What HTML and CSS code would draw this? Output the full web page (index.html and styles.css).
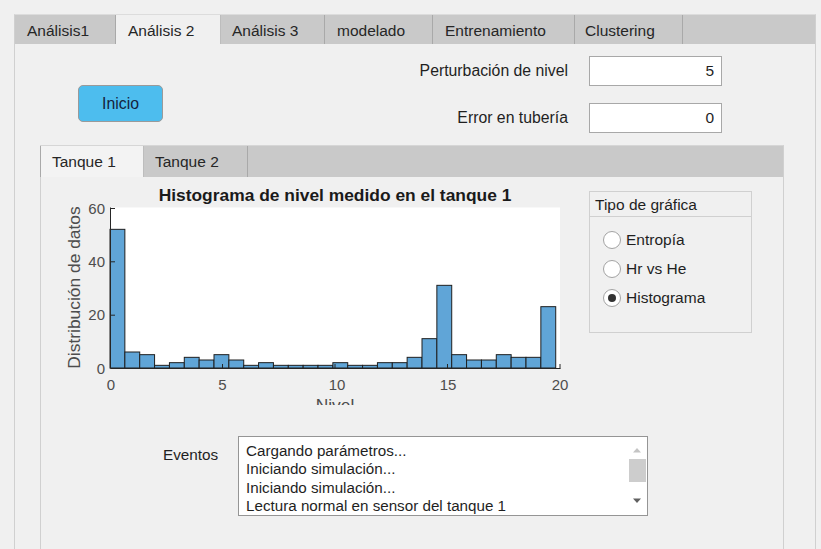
FILE: index.html
```html
<!DOCTYPE html>
<html lang="es">
<head>
<meta charset="utf-8">
<title>Análisis 2</title>
<link rel="stylesheet" href="styles.css">
</head>
<body>
<div class="app">
  <div class="tabgroup outer">
    <div class="tabbar">
      <div class="tab t1">Análisis1</div>
      <div class="tab active t2">Análisis 2</div>
      <div class="tab t3">Análisis 3</div>
      <div class="tab t4">modelado</div>
      <div class="tab t5">Entrenamiento</div>
      <div class="tab t6">Clustering</div>
    </div>
    <div class="tabbody">
      <div class="top">
        <button class="btn">Inicio</button>
        <div class="fields">
          <div class="field"><span class="flabel">Perturbación de nivel</span><input class="num" type="text" value="5"></div>
          <div class="field"><span class="flabel">Error en tubería</span><input class="num" type="text" value="0"></div>
        </div>
      </div>

      <div class="tabgroup inner">
        <div class="tabbar small">
          <div class="tab active k1">Tanque 1</div>
          <div class="tab k2">Tanque 2</div>
        </div>
        <div class="tabbody innerbody">
          <div class="chart-row">
            <svg class="chart" width="520" height="216" viewBox="0 0 520 216">
              <text class="title" x="279" y="11.5" text-anchor="middle">Histograma de nivel medido en el tanque 1</text>
              <rect x="54" y="18.5" width="450" height="160.5" fill="#ffffff"/>
              <g class="bars">
                <rect x="54.00" y="40.33" width="14.86" height="138.67"/>
                <rect x="68.86" y="163.00" width="14.86" height="16.00"/>
                <rect x="83.71" y="165.67" width="14.86" height="13.33"/>
                <rect x="98.57" y="176.33" width="14.86" height="2.67"/>
                <rect x="113.43" y="173.67" width="14.86" height="5.33"/>
                <rect x="128.29" y="168.33" width="14.86" height="10.67"/>
                <rect x="143.14" y="171.00" width="14.86" height="8.00"/>
                <rect x="158.00" y="165.67" width="14.86" height="13.33"/>
                <rect x="172.86" y="171.00" width="14.86" height="8.00"/>
                <rect x="187.71" y="176.33" width="14.86" height="2.67"/>
                <rect x="202.57" y="173.67" width="14.86" height="5.33"/>
                <rect x="217.43" y="176.33" width="14.86" height="2.67"/>
                <rect x="232.29" y="176.33" width="14.86" height="2.67"/>
                <rect x="247.14" y="176.33" width="14.86" height="2.67"/>
                <rect x="262.00" y="176.33" width="14.86" height="2.67"/>
                <rect x="276.86" y="173.67" width="14.86" height="5.33"/>
                <rect x="291.71" y="176.33" width="14.86" height="2.67"/>
                <rect x="306.57" y="176.33" width="14.86" height="2.67"/>
                <rect x="321.43" y="173.67" width="14.86" height="5.33"/>
                <rect x="336.29" y="173.67" width="14.86" height="5.33"/>
                <rect x="351.14" y="168.33" width="14.86" height="10.67"/>
                <rect x="366.00" y="149.67" width="14.86" height="29.33"/>
                <rect x="380.86" y="96.33" width="14.86" height="82.67"/>
                <rect x="395.71" y="165.67" width="14.86" height="13.33"/>
                <rect x="410.57" y="171.00" width="14.86" height="8.00"/>
                <rect x="425.43" y="171.00" width="14.86" height="8.00"/>
                <rect x="440.29" y="165.67" width="14.86" height="13.33"/>
                <rect x="455.14" y="168.33" width="14.86" height="10.67"/>
                <rect x="470.00" y="168.33" width="14.86" height="10.67"/>
                <rect x="484.86" y="117.67" width="14.86" height="61.33"/>
              </g>
              <path class="axis" d="M54.5 18.5 V179.5 H504.5 M54.5 19.5 H59 M54.5 72.8 H59 M54.5 126.2 H59 M166.5 179.5 V175 M279 179.5 V175 M391.5 179.5 V175 M504 179.5 V175"/>
              <text class="tick" x="49" y="24.7" text-anchor="end">60</text>
              <text class="tick" x="49" y="78.1" text-anchor="end">40</text>
              <text class="tick" x="49" y="131.4" text-anchor="end">20</text>
              <text class="tick" x="49" y="184.7" text-anchor="end">0</text>
              <text class="tick" x="55" y="201" text-anchor="middle">0</text>
              <text class="tick" x="166.5" y="201" text-anchor="middle">5</text>
              <text class="tick" x="281" y="201" text-anchor="middle">10</text>
              <text class="tick" x="392" y="201" text-anchor="middle">15</text>
              <text class="tick" x="504" y="201" text-anchor="middle">20</text>
              <text class="axlabel" transform="translate(24 98.5) rotate(-90)" text-anchor="middle">Distribución de datos</text>
              <text class="axlabel" x="279" y="221.5" text-anchor="middle">Nivel</text>
            </svg>

            <div class="group">
              <div class="group-head">Tipo de gráfica</div>
              <div class="radios">
                <div class="radio"><span class="dot"></span><span>Entropía</span></div>
                <div class="radio"><span class="dot"></span><span>Hr vs He</span></div>
                <div class="radio"><span class="dot on"></span><span>Histograma</span></div>
              </div>
            </div>
          </div>

          <div class="events">
            <span class="elabel">Eventos</span>
            <div class="listbox">
              <div class="lines">
                <div>Cargando parámetros...</div>
                <div>Iniciando simulación...</div>
                <div>Iniciando simulación...</div>
                <div>Lectura normal en sensor del tanque 1</div>
              </div>
              <div class="scroll">
                <svg class="arrow" width="10" height="6" viewBox="0 0 10 6"><path d="M1 5.5 L5 1 L9 5.5 Z" fill="#c4c4c4"/></svg>
                <div class="thumb"></div>
                <div class="spacer"></div>
                <svg class="arrow" width="10" height="6" viewBox="0 0 10 6"><path d="M1 0.5 L5 5 L9 0.5 Z" fill="#606060"/></svg>
              </div>
            </div>
          </div>
        </div>
      </div>
    </div>
  </div>
</div>
</body>
</html>
```

FILE: styles.css
```css
* { box-sizing: border-box; }

html, body {
  margin: 0;
  background: #f0f0f0;
  font-family: "Liberation Sans", Arial, sans-serif;
  font-size: 15.5px;
  color: #1f1f1f;
  overflow: hidden;
}

.app {
  padding: 14px 0 0 14px;
  height: 549px;
  overflow: hidden;
}

.tabgroup {
  display: flex;
  flex-direction: column;
}

.outer {
  width: 802px;
  height: 580px;
}

.tabbar {
  display: flex;
  height: 30px;
  background: #c9c9c9;
  border-top: 1px solid #dcdcdc;
  border-left: 1px solid #d0d0d0;
  border-right: 1px solid #d0d0d0;
}

.tab {
  height: 100%;
  padding: 2px 0 0 12px;
  display: flex;
  align-items: center;
  border-right: 1px solid #a9a9a9;
  color: #262626;
  white-space: nowrap;
}

.tab.active {
  background: #f0f0f0;
  border-left: 1px solid #a9a9a9;
  margin-left: -1px;
  border-right: 1px solid #bdbdbd;
}

.t1 { width: 101px; }
.t2 { width: 106px; }
.t3 { width: 104px; padding-left: 11px; }
.t4 { width: 108px; }
.t5 { width: 142px; }
.t6 { width: 108px; padding-left: 10px; }

.tabbody {
  flex: 1;
  background: #f0f0f0;
  border-left: 1px solid #d0d0d0;
  border-right: 1px solid #d0d0d0;
}

.top {
  display: flex;
  height: 101px;
}

.btn {
  margin: 41px 0 0 63px;
  width: 85px;
  height: 37px;
  background: #4dbdee;
  border: 1px solid #9a9a9a;
  border-radius: 5px;
  font-family: inherit;
  font-size: 15.8px;
  color: #15233d;
  padding: 0;
}

.fields {
  margin: 12px 93px 0 auto;
  display: flex;
  flex-direction: column;
  gap: 17px;
}

.field {
  display: flex;
  align-items: center;
  justify-content: flex-end;
  gap: 21px;
}

.flabel {
  font-size: 15.8px;
  color: #1f1f1f;
}

.num {
  width: 133px;
  height: 30px;
  border: 1px solid #a8a8a8;
  background: #ffffff;
  text-align: right;
  padding: 0 7px 0 4px;
  font-family: inherit;
  font-size: 15.5px;
  color: #1f1f1f;
  outline: none;
}

.inner {
  margin-left: 25px;
  width: 744px;
  height: 440px;
}

.tabbar.small {
  height: 32px;
  border-top: 1px solid #d6d6d6;
}

.tabbar.small .tab {
  padding: 0 0 0 11px;
}

.tabbar.small .tab.active {
  background: #f3f3f3;
}

.k1 { width: 104px; }
.k2 { width: 104px; }

.innerbody {
  padding-top: 12px;
}

.chart-row {
  display: flex;
  align-items: flex-start;
}

.chart {
  display: block;
  margin-left: 15px;
  flex: none;
}

.chart .title {
  font-size: 17.4px;
  font-weight: bold;
  fill: #1a1a1a;
}

.chart .bars rect {
  fill: #60a5d7;
  stroke: #1f1f1f;
  stroke-width: 1;
}

.chart .axis {
  fill: none;
  stroke: #262626;
  stroke-width: 1;
}

.chart .tick {
  font-size: 15px;
  fill: #4d4d4d;
}

.chart .axlabel {
  font-size: 17.4px;
  fill: #4d4d4d;
}

.group {
  margin: 2px 0 0 13px;
  width: 163px;
  height: 142px;
  border: 1px solid #d0d0d0;
}

.group-head {
  height: 25px;
  border-bottom: 1px solid #d0d0d0;
  padding: 2px 0 0 5px;
  display: flex;
  align-items: center;
}

.radios {
  padding-top: 8px;
}

.radio {
  height: 29px;
  display: flex;
  align-items: center;
  gap: 5px;
  padding-left: 13px;
}

.dot {
  width: 18px;
  height: 18px;
  border-radius: 50%;
  border: 1px solid #a3a3a3;
  background: #ffffff;
  display: flex;
  align-items: center;
  justify-content: center;
}

.dot.on::after {
  content: "";
  width: 8px;
  height: 8px;
  border-radius: 50%;
  background: #333333;
}

.events {
  display: flex;
  margin-top: 31px;
}

.elabel {
  margin: 10px 0 0 122px;
  width: 56px;
  line-height: 18px;
  font-size: 15.3px;
}

.listbox {
  margin-left: 19px;
  width: 410px;
  height: 80px;
  border: 1px solid #959595;
  background: #ffffff;
  display: flex;
}

.lines {
  flex: 1;
  padding: 5px 0 0 7px;
  font-size: 15.2px;
  line-height: 18.3px;
  color: #1f1f1f;
  white-space: nowrap;
}

.scroll {
  width: 20px;
  display: flex;
  flex-direction: column;
  align-items: center;
  padding: 10px 0 11px;
}

.arrow {
  display: block;
  flex: none;
}

.thumb {
  margin-top: 6px;
  width: 17px;
  height: 23px;
  background: #cdcdcd;
}

.spacer {
  flex: 1;
}
```
